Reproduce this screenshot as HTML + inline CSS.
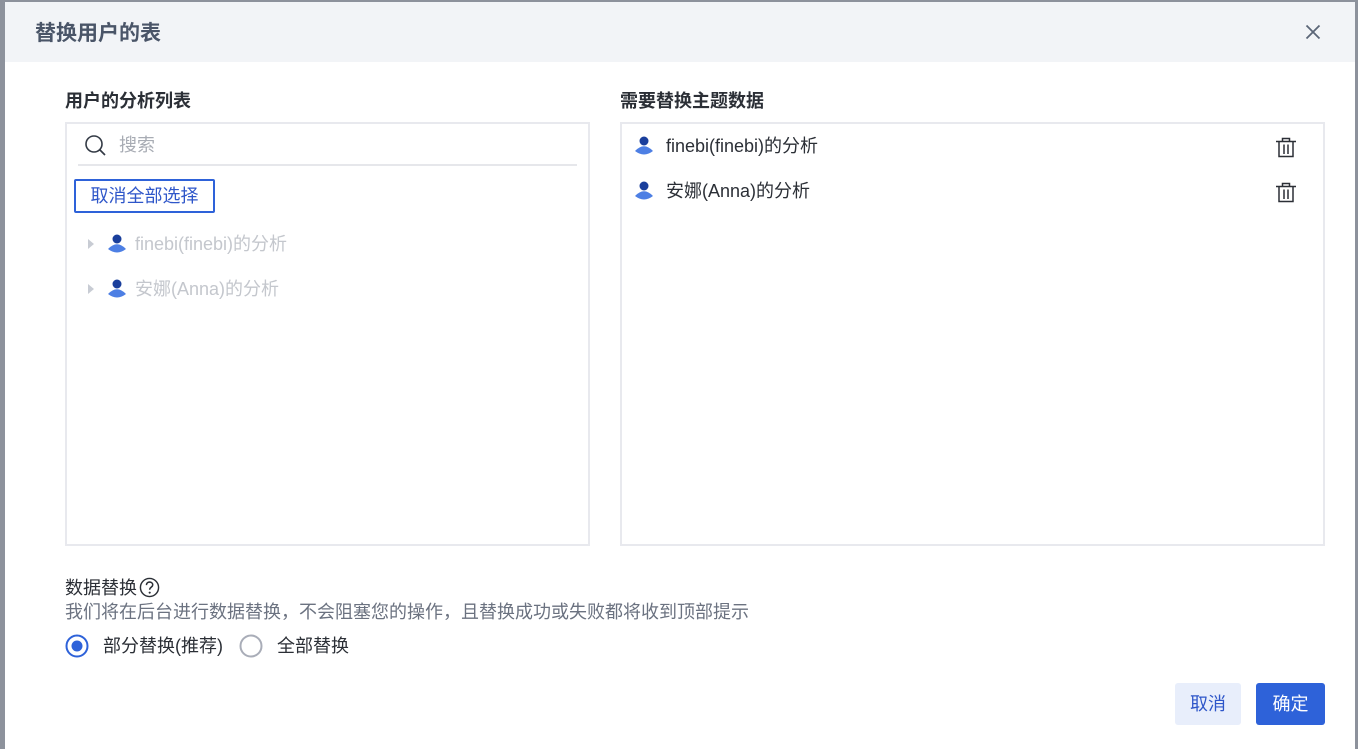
<!DOCTYPE html>
<html><head><meta charset="utf-8"><style>
*{margin:0;padding:0;box-sizing:border-box}
body{width:1358px;height:749px;background:#8d929c;font-family:"Liberation Sans","Noto Sans CJK SC",sans-serif;position:relative;overflow:hidden}
.dlg{position:absolute;left:5px;top:2px;width:1350px;height:747px;background:#fff}
.hd{position:absolute;left:0;top:0;width:1350px;height:60px;background:#f2f4f7}
.hd .t{position:absolute;left:30px;top:21px;font-size:21px;line-height:21px;font-weight:bold;color:#4a5568}
.abs{position:absolute}
.dlg div{line-height:1}
.lbl{font-size:18px;font-weight:bold;color:#2b2f36}
.panel{position:absolute;border:2px solid #e8e9ee}
.item{position:absolute;font-size:18px;white-space:nowrap}
</style></head><body>
<div class="dlg">
<div class="hd"><div class="t">替换用户的表</div>
<svg class="abs" style="left:1300px;top:22px" width="16" height="16" viewBox="0 0 16 16"><path d="M1.5 1.5L14.5 14.5M14.5 1.5L1.5 14.5" stroke="#5b6677" stroke-width="1.8"/></svg>
</div>
<div class="abs lbl" style="left:60px;top:90px">用户的分析列表</div>
<div class="abs lbl" style="left:615px;top:90px">需要替换主题数据</div>
<div class="panel" style="left:60px;top:120px;width:525px;height:424px">
 <svg class="abs" style="left:17px;top:10px" width="24" height="24" viewBox="0 0 24 24"><circle cx="10" cy="10" r="8" fill="none" stroke="#333a45" stroke-width="1.6"/><path d="M16 16l5 5" stroke="#333a45" stroke-width="1.7"/></svg>
 <div class="abs" style="left:52px;top:12px;font-size:18px;color:#a8acb4">搜索</div>
 <div class="abs" style="left:11px;top:40px;width:499px;height:2px;background:#e6e7eb"></div>
 <div class="abs" style="left:7px;top:55px;width:141px;height:34px;border:2px solid #2e62d9;border-radius:2px;color:#2e56c9;font-size:18px;line-height:30px;text-align:center">取消全部选择</div>
 <svg class="abs" style="left:20px;top:114px" width="8" height="12"><path d="M1 1L7 6L1 11Z" fill="#c8ccd4"/></svg>
 <svg class="abs" style="left:40px;top:110px" width="20" height="20" viewBox="0 0 20 20"><circle cx="10" cy="5" r="4.5" fill="#1a3f9c"/><path d="M1 15Q10 5.5 19 15Q10 22 1 15Z" fill="#4d7fe4"/></svg>
 <div class="item" style="left:68px;top:111px;color:#c4c7cd">finebi(finebi)的分析</div>
 <svg class="abs" style="left:20px;top:159px" width="8" height="12"><path d="M1 1L7 6L1 11Z" fill="#c8ccd4"/></svg>
 <svg class="abs" style="left:40px;top:155px" width="20" height="20" viewBox="0 0 20 20"><circle cx="10" cy="5" r="4.5" fill="#1a3f9c"/><path d="M1 15Q10 5.5 19 15Q10 22 1 15Z" fill="#4d7fe4"/></svg>
 <div class="item" style="left:68px;top:156px;color:#c4c7cd">安娜(Anna)的分析</div>
</div>
<div class="panel" style="left:615px;top:120px;width:705px;height:424px">
 <svg class="abs" style="left:12px;top:12px" width="20" height="20" viewBox="0 0 20 20"><circle cx="10" cy="5" r="4.5" fill="#1a3f9c"/><path d="M1 15Q10 5.5 19 15Q10 22 1 15Z" fill="#4d7fe4"/></svg>
 <div class="item" style="left:44px;top:13px;color:#2b2f36">finebi(finebi)的分析</div>
 <svg class="abs" style="left:12px;top:57px" width="20" height="20" viewBox="0 0 20 20"><circle cx="10" cy="5" r="4.5" fill="#1a3f9c"/><path d="M1 15Q10 5.5 19 15Q10 22 1 15Z" fill="#4d7fe4"/></svg>
 <div class="item" style="left:44px;top:58px;color:#2b2f36">安娜(Anna)的分析</div>
 <svg class="abs" style="left:653px;top:12px" width="22" height="22" viewBox="0 0 22 22"><path d="M1 5.5H21M7.5 5.5V2.5H14.5V5.5M4 5.5V20.5H18V5.5M9 8.5V18M13 8.5V18" fill="none" stroke="#2b2f36" stroke-width="1.5"/></svg>
 <svg class="abs" style="left:653px;top:57px" width="22" height="22" viewBox="0 0 22 22"><path d="M1 5.5H21M7.5 5.5V2.5H14.5V5.5M4 5.5V20.5H18V5.5M9 8.5V18M13 8.5V18" fill="none" stroke="#2b2f36" stroke-width="1.5"/></svg>
</div>
<div class="abs" style="left:60px;top:577px;font-size:18px;color:#2b2f36">数据替换</div>
<svg class="abs" style="left:134px;top:575px" width="21" height="21" viewBox="0 0 22 22"><circle cx="11" cy="11" r="9.5" fill="none" stroke="#2b2f36" stroke-width="1.5"/><path d="M7.8 8.5c0-2 1.5-3.2 3.3-3.2s3.3 1.2 3.3 3c0 2.3-3.2 2.4-3.2 5" fill="none" stroke="#2b2f36" stroke-width="1.6"/><circle cx="11.2" cy="16.4" r="1.1" fill="#2b2f36"/></svg>
<div class="abs" style="left:60px;top:601px;font-size:18px;color:#6b7280">我们将在后台进行数据替换，不会阻塞您的操作，且替换成功或失败都将收到顶部提示</div>
<svg class="abs" style="left:60px;top:632px" width="26" height="26"><circle cx="12" cy="12" r="10.5" fill="none" stroke="#2e62d9" stroke-width="2"/><circle cx="12" cy="12" r="5.5" fill="#2e62d9"/></svg>
<div class="abs" style="left:98px;top:635px;font-size:18px;color:#2b2f36">部分替换(推荐)</div>
<svg class="abs" style="left:234px;top:632px" width="26" height="26"><circle cx="12" cy="12" r="10.5" fill="none" stroke="#a9adb8" stroke-width="2"/></svg>
<div class="abs" style="left:272px;top:635px;font-size:18px;color:#2b2f36">全部替换</div>
<div class="abs" style="left:1170px;top:681px;width:66px;height:42px;background:#e8eefb;border-radius:3px;color:#2e56c9;font-size:18px;line-height:42px;text-align:center">取消</div>
<div class="abs" style="left:1251px;top:681px;width:69px;height:42px;background:#2e62d9;border-radius:3px;color:#fff;font-size:18px;line-height:42px;text-align:center">确定</div>
</div>
</body></html>
